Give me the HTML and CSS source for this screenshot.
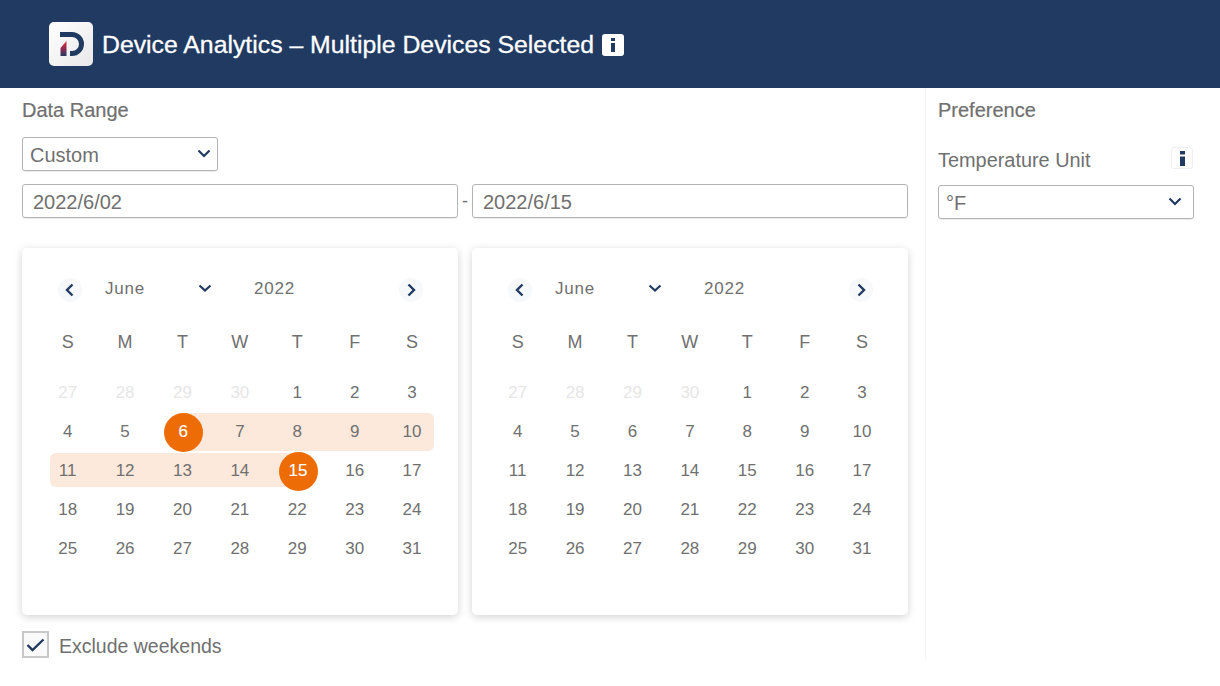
FILE: index.html
```html
<!DOCTYPE html>
<html lang="en">
<head>
<meta charset="utf-8">
<title>Device Analytics</title>
<link rel="stylesheet" href="styles.css">
</head>
<body>
<header class="topbar">
  <div class="logo">
    <svg width="26" height="26" viewBox="0 0 26 26"><defs><linearGradient id="wedge" x1="0" y1="0" x2="0" y2="1"><stop offset="0" stop-color="#e0302c"/><stop offset="0.55" stop-color="#8a2a55"/><stop offset="1" stop-color="#213a61"/></linearGradient></defs><path d="M1 3.500h12a9.500 9.500 0 0 1 0 19H11" fill="none" stroke="#213a61" stroke-width="5"/><path d="M1.500 25v-8l6-7v15z" fill="url(#wedge)"/></svg>
  </div>
  <h1 class="title">Device Analytics – Multiple Devices Selected</h1>
  <span class="info info-head"><svg width="6" height="14" viewBox="0 0 6 14"><rect x="1" y="0" width="4" height="3" fill="#213a61"/><rect x="1" y="5" width="4" height="9" fill="#213a61"/></svg></span>
</header>
<main class="content">
  <section class="left">
    <h2 class="heading">Data Range</h2>
    <div class="select select-range"><span>Custom</span>
      <svg class="chev" width="14" height="9" viewBox="0 0 14 9"><path d="M1.500 1.500L7 7l5.500-5.500" fill="none" stroke="#213a61" stroke-width="2.200"/></svg></div>
    <div class="dates">
      <div class="input">2022/6/02</div><span class="dash">-</span><div class="input">2022/6/15</div>
    </div>
    <div class="cals">
      <div class="cal">
        <div class="nav">
          <span class="arrow"><svg width="10" height="14" viewBox="0 0 10 14"><path d="M7.500 1.500L2 7l5.500 5.500" fill="none" stroke="#213a61" stroke-width="2.400"/></svg></span>
          <span class="month">June</span>
          <svg class="navchev" width="14" height="8" viewBox="0 0 14 8"><path d="M1.500 1.500L7 6.500l5.500-5" fill="none" stroke="#213a61" stroke-width="2.200"/></svg>
          <span class="year">2022</span>
          <span class="arrow arrow-next"><svg width="10" height="14" viewBox="0 0 10 14"><path d="M2.500 1.500L8 7l-5.500 5.500" fill="none" stroke="#213a61" stroke-width="2.400"/></svg></span>
        </div>
        <div class="week"><span>S</span><span>M</span><span>T</span><span>W</span><span>T</span><span>F</span><span>S</span></div>
        <div class="days">
          <span class="off">27</span><span class="off">28</span><span class="off">29</span><span class="off">30</span><span>1</span><span>2</span><span>3</span>
          <span>4</span><span>5</span><span class="band from"><b class="pick">6</b></span><span class="band">7</span><span class="band">8</span><span class="band">9</span><span class="band row-end">10</span>
          <span class="band row-start low">11</span><span class="band low">12</span><span class="band low">13</span><span class="band low">14</span><span class="band low to"><b class="pick">15</b></span><span>16</span><span>17</span>
          <span>18</span><span>19</span><span>20</span><span>21</span><span>22</span><span>23</span><span>24</span>
          <span>25</span><span>26</span><span>27</span><span>28</span><span>29</span><span>30</span><span>31</span>
        </div>
      </div>
      <div class="cal">
        <div class="nav">
          <span class="arrow"><svg width="10" height="14" viewBox="0 0 10 14"><path d="M7.500 1.500L2 7l5.500 5.500" fill="none" stroke="#213a61" stroke-width="2.400"/></svg></span>
          <span class="month">June</span>
          <svg class="navchev" width="14" height="8" viewBox="0 0 14 8"><path d="M1.500 1.500L7 6.500l5.500-5" fill="none" stroke="#213a61" stroke-width="2.200"/></svg>
          <span class="year">2022</span>
          <span class="arrow arrow-next"><svg width="10" height="14" viewBox="0 0 10 14"><path d="M2.500 1.500L8 7l-5.500 5.500" fill="none" stroke="#213a61" stroke-width="2.400"/></svg></span>
        </div>
        <div class="week"><span>S</span><span>M</span><span>T</span><span>W</span><span>T</span><span>F</span><span>S</span></div>
        <div class="days">
          <span class="off">27</span><span class="off">28</span><span class="off">29</span><span class="off">30</span><span>1</span><span>2</span><span>3</span>
          <span>4</span><span>5</span><span>6</span><span>7</span><span>8</span><span>9</span><span>10</span>
          <span>11</span><span>12</span><span>13</span><span>14</span><span>15</span><span>16</span><span>17</span>
          <span>18</span><span>19</span><span>20</span><span>21</span><span>22</span><span>23</span><span>24</span>
          <span>25</span><span>26</span><span>27</span><span>28</span><span>29</span><span>30</span><span>31</span>
        </div>
      </div>
    </div>
    <label class="check">
      <span class="box"><svg width="19" height="14" viewBox="0 0 19 14"><path d="M1.500 7l5 5L17.500 1.500" fill="none" stroke="#213a61" stroke-width="2.400"/></svg></span>
      <span class="check-text">Exclude weekends</span>
    </label>
  </section>
  <aside class="right">
    <h2 class="heading">Preference</h2>
    <div class="unit-row">
      <span class="unit-label">Temperature Unit</span>
      <span class="info info-small"><svg width="5" height="15" viewBox="0 0 5 15"><rect x="0" y="0" width="5" height="3.500" fill="#213a61"/><rect x="0" y="5.500" width="5" height="9.500" fill="#213a61"/></svg></span>
    </div>
    <div class="select select-unit"><span>°F</span>
      <svg class="chev" width="14" height="9" viewBox="0 0 14 9"><path d="M1.500 1.500L7 7l5.500-5.500" fill="none" stroke="#213a61" stroke-width="2.200"/></svg></div>
  </aside>
</main>
</body>
</html>
```
FILE: styles.css
```css
* { box-sizing: border-box; }
html, body { margin: 0; padding: 0; }
body {
  width: 1220px;
  height: 686px;
  overflow: hidden;
  background: #fff;
  color: #707070;
  font-family: "Liberation Sans", Arial, sans-serif;
}
.topbar {
  height: 88px;
  background: #213a61;
  display: flex;
  align-items: center;
  padding-left: 49px;
}
.logo {
  width: 44px;
  height: 44px;
  border-radius: 5px;
  background: linear-gradient(135deg, #fff, #e8e8ea);
  display: flex;
  align-items: center;
  justify-content: center;
  margin-right: 9px;
}
.logo svg { margin-left: 2px; }
.title {
  margin: 2px 8px 0 0;
  color: #fff;
  font-size: 24.8px;
  font-weight: 400;
  line-height: 28px;
  -webkit-text-stroke: 0.3px #fff;
}
.info {
  display: flex;
  align-items: center;
  justify-content: center;
  border-radius: 3px;
  background: #fff;
}
.info-head { width: 22px; height: 22px; margin-top: 2px; }
.info-small {
  width: 22px;
  height: 22px;
  border: 1px solid #eceef2;
}
.content { display: flex; height: 572px; }
.left {
  width: 926px;
  padding-left: 22px;
  border-right: 1px solid #f4f4f4;
}
.right { flex: 1; padding: 0 26px 0 12px; }
.heading {
  margin: 11px 0 0;
  font-size: 20px;
  line-height: 22px;
  font-weight: 400;
  -webkit-text-stroke: 0.2px #707070;
}
.select {
  display: flex;
  align-items: center;
  justify-content: space-between;
  border: 1px solid #b4b4b4;
  border-radius: 3px;
  box-shadow: 0 1px 1px rgba(0,0,0,.08);
  font-size: 20px;
}
.select-range {
  width: 196px;
  height: 34px;
  margin-top: 16px;
  padding: 2px 6px 0 7px;
}
.select-range .chev { margin-top: -3px; }
.select-unit {
  height: 34px;
  margin-top: 16px;
  padding: 2px 11px 0 7px;
}
.select-unit .chev { margin-top: -4px; }
.dates {
  display: flex;
  align-items: center;
  margin-top: 13px;
}
.input {
  width: 436px;
  height: 34px;
  border: 1px solid #b4b4b4;
  border-radius: 3px;
  box-shadow: 0 1px 1px rgba(0,0,0,.08);
  font-size: 20px;
  line-height: 34px;
  padding-left: 10px;
}
.dash {
  width: 14px;
  text-align: center;
  font-size: 18px;
}
.cals {
  display: flex;
  gap: 14px;
  margin-top: 30px;
}
.cal {
  width: 436px;
  height: 367px;
  padding: 30px 17px 0 17px;
  border-radius: 5px;
  background: #fff;
  box-shadow: 0 2px 8px rgba(0,0,0,.18);
}
.nav {
  display: flex;
  align-items: center;
  height: 24px;
  font-size: 17px;
  letter-spacing: 0.8px;
}
.arrow {
  width: 24px;
  height: 24px;
  margin-left: 19px;
  border-radius: 50%;
  background: #f7f8fa;
  display: flex;
  align-items: center;
  justify-content: center;
}
.arrow-next { margin-left: 104px; }
.month { width: 93px; margin-left: 23px; margin-top: -3px; }
.navchev { margin-top: -5px; }
.year { margin-left: 42px; margin-top: -3px; }
.week, .days {
  display: grid;
  grid-template-columns: repeat(7, 57.4px);
  text-align: center;
}
.week {
  margin-top: 28px;
  height: 24px;
  line-height: 24px;
  font-size: 18px;
}
.days {
  margin-top: 19px;
  grid-auto-rows: 39px;
  font-size: 17px;
  line-height: 39px;
}
.days > span { position: relative; z-index: 0; }
.off { color: #e6e6e6; }
.band::before {
  content: "";
  position: absolute;
  z-index: -1;
  left: 0;
  right: 0;
  top: 1px;
  bottom: 0;
  background: #fde9dc;
}
.band.low::before { top: 2px; bottom: 3px; }
.band.row-end::before { right: 7px; border-radius: 0 6px 6px 0; }
.band.row-start::before { left: 11px; border-radius: 6px 0 0 6px; }
.band.from::before { left: 50%; }
.band.to::before { right: 50%; }
.pick {
  position: absolute;
  left: 10px;
  top: 1px;
  width: 39px;
  height: 39px;
  border-radius: 50%;
  background: #ee6c05;
  color: #fff;
  font-weight: 400;
  -webkit-text-stroke: 0.15px #fff;
  line-height: 38px;
}
.check {
  display: flex;
  align-items: center;
  gap: 10px;
  margin-top: 16px;
  font-size: 19.5px;
}
.check-text { margin-top: 3px; }
.box {
  width: 27px;
  height: 27px;
  border: 2px solid #c8c8c8;
  background: #fafafa;
  display: flex;
  align-items: center;
  justify-content: center;
}
.unit-row {
  display: flex;
  align-items: center;
  justify-content: space-between;
  margin-top: 26px;
  height: 22px;
  padding-right: 1px;
}
.unit-label { font-size: 19.9px; margin-top: 4px; }
```
